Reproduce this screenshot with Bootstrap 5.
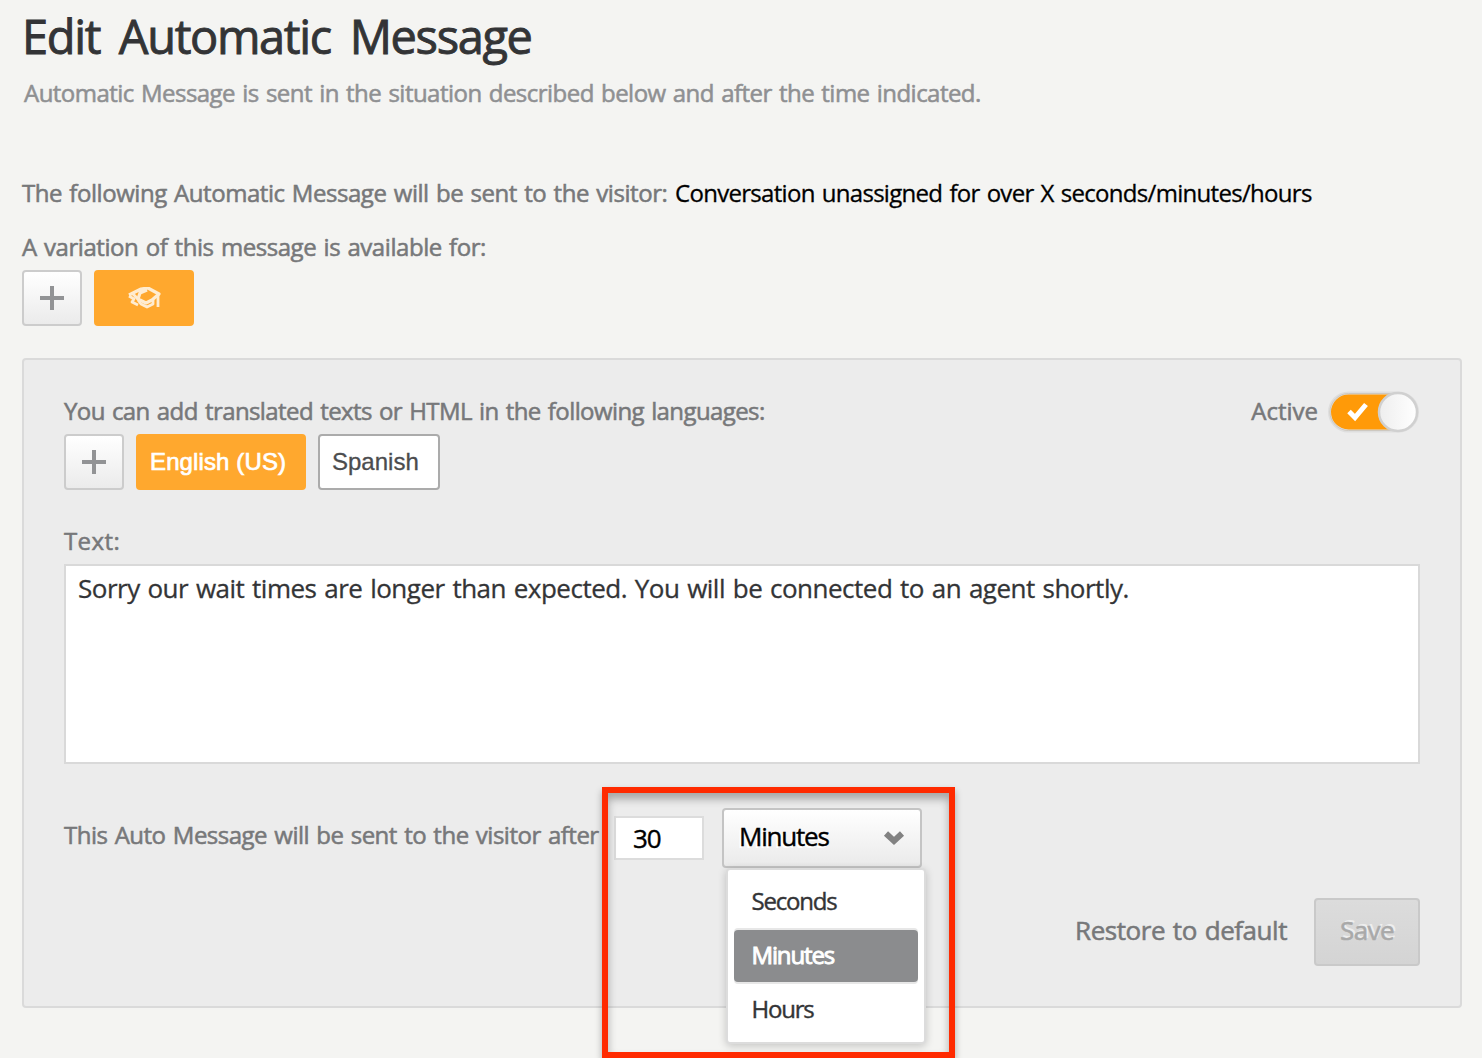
<!DOCTYPE html>
<html lang="en">
<head>
<meta charset="utf-8">
<meta name="viewport" content="width=device-width, initial-scale=1">
<title>Edit Automatic Message</title>
<link href="https://cdn.jsdelivr.net/npm/bootstrap@5.3.0/dist/css/bootstrap.min.css" rel="stylesheet">
<style>
html, body { height: 1058px; overflow: hidden; }
body { background: #f4f4f2; color: #77787a; font-family: "Trebuchet MS", "Open Sans", sans-serif; font-size: 24px; line-height: 46px; white-space: nowrap; word-spacing: 1.5px; -webkit-text-stroke: .55px currentColor; }
.page-wrap { padding: 0 20px 0 22px; }
.page-title { font-size: 47px; line-height: 72px; height: 70px; font-weight: 400; color: #333436; letter-spacing: -1.37px; word-spacing: 8px; -webkit-text-stroke-width: .9px; }
.page-sub { color: #8f9092; padding-left: 2px; margin-bottom: 50px; letter-spacing: -.53px; }
.sent-line { line-height: 54px; margin-bottom: 4px; }
.t3 { letter-spacing: -.45px; width: 653px; }
.t4 { letter-spacing: -.7px; -webkit-text-stroke-width: .3px; }
.t5 { letter-spacing: -.44px; }
.t6 { letter-spacing: -.59px; }
.t10 { letter-spacing: .4px; }
.t12 { letter-spacing: -.5px; }
.btn-row { gap: 12px; height: 56px; }
.tile { --bs-btn-padding-x: 12px; --bs-btn-padding-y: 0; border: 2px solid #ccc; border-radius: 4px; height: 56px; font-family: "Liberation Sans", Arial, sans-serif; font-size: 24px; font-weight: 400; line-height: 52px; text-align: left; word-spacing: 0; }
.tile-add { width: 60px; background: linear-gradient(#fff, #ebebeb); }
.tile-on { background: #ffa82e; border-color: #ffa82e; color: #fff; letter-spacing: .12px; -webkit-text-stroke: .7px #fff; }
.tile-off { background: #fff; border-color: #ababab; color: #4b4c4e; -webkit-text-stroke-width: .3px; }
.editor { margin-top: 32px; height: 650px; background: #ececec; border: 2px solid #dadada; border-radius: 4px; padding: 28px 40px 0; }
.field-label { margin-top: 28px; }
.msg-box { height: 200px; border: 2px solid #d9d9d9; padding: 0 12px; font-size: 26px; line-height: 44px; color: #333436; background: #fff; letter-spacing: -.5px; -webkit-text-stroke-width: .3px; overflow: hidden; }
.delay-row { margin-top: 44px; height: 60px; }
.delay-text { width: 550px; line-height: 54px; }
.delay-num { width: 90px; height: 44px; margin: 8px 18px 0 0; border: 2px solid #dcdcdc; padding: 0 17px; color: #000; font-size: 26px; line-height: 40px; background: #fff; letter-spacing: -1.2px; -webkit-text-stroke-width: .4px; }
.unit-btn { width: 200px; height: 60px; border: 2px solid #c4c4c4; border-radius: 4px; background: linear-gradient(#fff, #eaeaea); padding: 0 15px; color: #000; font-size: 26px; line-height: 54px; letter-spacing: -1.2px; text-shadow: -2px 2px 0 #fff; -webkit-text-stroke-width: .4px; }
.unit-btn span { padding-bottom: 4px; }
.unit-menu { display: block; left: 4px; top: 60px; width: 200px; min-width: 0; height: 176px; margin: 0; padding: 6px 6px; border: 2px solid #dcdcdc; border-radius: 4px; box-shadow: 0 2px 8px rgba(0,0,0,.2); background: #fff; z-index: 3; }
.unit-menu .dropdown-item { height: 52px; margin-bottom: 2px; padding: 0 17.5px; border-radius: 4px; color: #333436; font-size: 24px; line-height: 49px; letter-spacing: -1.2px; -webkit-text-stroke-width: .4px; }
.unit-menu .dropdown-item.active { background: #8b8c8e; color: #fff; letter-spacing: -1.15px; box-shadow: 0 -2px 0 #e7e7e7, 0 2px 0 #e7e7e7; -webkit-text-stroke-width: .9px; }
.callout-frame { left: 538px; top: -21px; width: 353px; height: 271px; border: 6px solid #ff2a00; box-shadow: 0 4px 7px rgba(0,0,0,.3), inset 0 6px 8px rgba(0,0,0,.3); z-index: 4; pointer-events: none; }
.foot-row { margin-top: 30px; height: 68px; gap: 27px; font-size: 26px; }
.t18 { letter-spacing: -.45px; padding-bottom: 4px; }
.save-btn, .save-btn:disabled { width: 106px; height: 68px; border: 2px solid #c9c9c9; border-radius: 4px; background: linear-gradient(#dcdcdc, #d4d4d4); color: #a9a9a9; font-size: 26px; line-height: 60px; padding: 0 0 4px; letter-spacing: -.6px; text-shadow: 2px -2px 0 #eee; opacity: 1; }
</style>
</head>
<body>
<main class="page-wrap">
  <h1 class="page-title m-0">Edit Automatic Message</h1>
  <p class="page-sub">Automatic Message is sent in the situation described below and after the time indicated.</p>
  <div class="sent-line d-flex"><span class="t3">The following Automatic Message will be sent to the visitor:</span><span class="t4 text-black">Conversation unassigned for over X seconds/minutes/hours</span></div>
  <div><span class="t5">A variation of this message is available for:</span></div>
  <div class="btn-row d-flex">
    <button class="btn tile tile-add d-flex align-items-center justify-content-center" aria-label="Add variation"><svg width="24" height="24" viewBox="0 0 24 24"><path d="M12 0v24M0 12h24" stroke="#929395" stroke-width="4"/></svg></button>
    <button class="btn tile tile-on d-flex align-items-center justify-content-center" style="width:100px" aria-label="Skill"><svg width="34" height="22" viewBox="0 0 34 22" fill="none" stroke="#ffecd0" stroke-linejoin="round"><path d="M2 8 14 2l7-1 11 6-7 6-6 3-8-4 2-6 7-3" stroke-width="3.200"/><path d="M2 9l5 3-2 3 6 3M11 13l3 4 6 3 6-3v-4M31 8v12M6 7l5 5" stroke-width="2.800"/></svg></button>
  </div>
  <section class="editor">
    <div class="d-flex justify-content-between">
      <span class="t6">You can add translated texts or HTML in the following languages:</span>
      <div class="d-flex align-items-center"><span>Active</span>
        <svg class="ms-2" width="94" height="46" viewBox="0 0 94 46"><defs><linearGradient id="knob"><stop stop-color="#eee"/><stop offset="1" stop-color="#fff"/></linearGradient></defs><rect x="3.500" y="5" width="88" height="38" rx="19" fill="#ff9a08" stroke="#dedede" stroke-width="3"/><rect x="4" y="5.500" width="87" height="37" rx="18.500" fill="none" stroke="#cdc8c0" stroke-width="1"/><circle cx="72" cy="24" r="19" fill="url(#knob)" stroke="#d0d0d0" stroke-width="2.500"/><path d="M23 23.500l6 6 11-13" fill="none" stroke="#fff" stroke-width="5"/></svg>
      </div>
    </div>
    <div class="btn-row d-flex">
      <button class="btn tile tile-add d-flex align-items-center justify-content-center" aria-label="Add language"><svg width="24" height="24" viewBox="0 0 24 24"><path d="M12 0v24M0 12h24" stroke="#929395" stroke-width="4"/></svg></button>
      <button class="btn tile tile-on" style="width:170px">English (US)</button>
      <button class="btn tile tile-off" style="width:122px">Spanish</button>
    </div>
    <div class="field-label"><span class="t10">Text:</span></div>
    <div class="msg-box">Sorry our wait times are longer than expected. You will be connected to an agent shortly.</div>
    <div class="delay-row d-flex position-relative">
      <div class="delay-text"><span class="t12">This Auto Message will be sent to the visitor after</span></div>
      <div class="delay-num">30</div>
      <div class="dropdown">
        <button class="btn unit-btn d-flex align-items-center justify-content-between"><span>Minutes</span><svg width="22" height="16" viewBox="0 0 22 16"><path d="M3 3.500l8 7.500 8-7.500" fill="none" stroke="#828282" stroke-width="6"/></svg></button>
        <div class="dropdown-menu unit-menu show">
          <a class="dropdown-item" href="#">Seconds</a>
          <a class="dropdown-item active" href="#">Minutes</a>
          <a class="dropdown-item" href="#">Hours</a>
        </div>
      </div>
      <div class="callout-frame position-absolute"></div>
    </div>
    <div class="foot-row d-flex justify-content-end align-items-center">
      <span class="t18">Restore to default</span>
      <button class="btn save-btn" disabled>Save</button>
    </div>
  </section>
</main>
<script src="https://cdn.jsdelivr.net/npm/bootstrap@5.3.0/dist/js/bootstrap.bundle.min.js"></script>
</body>
</html>
